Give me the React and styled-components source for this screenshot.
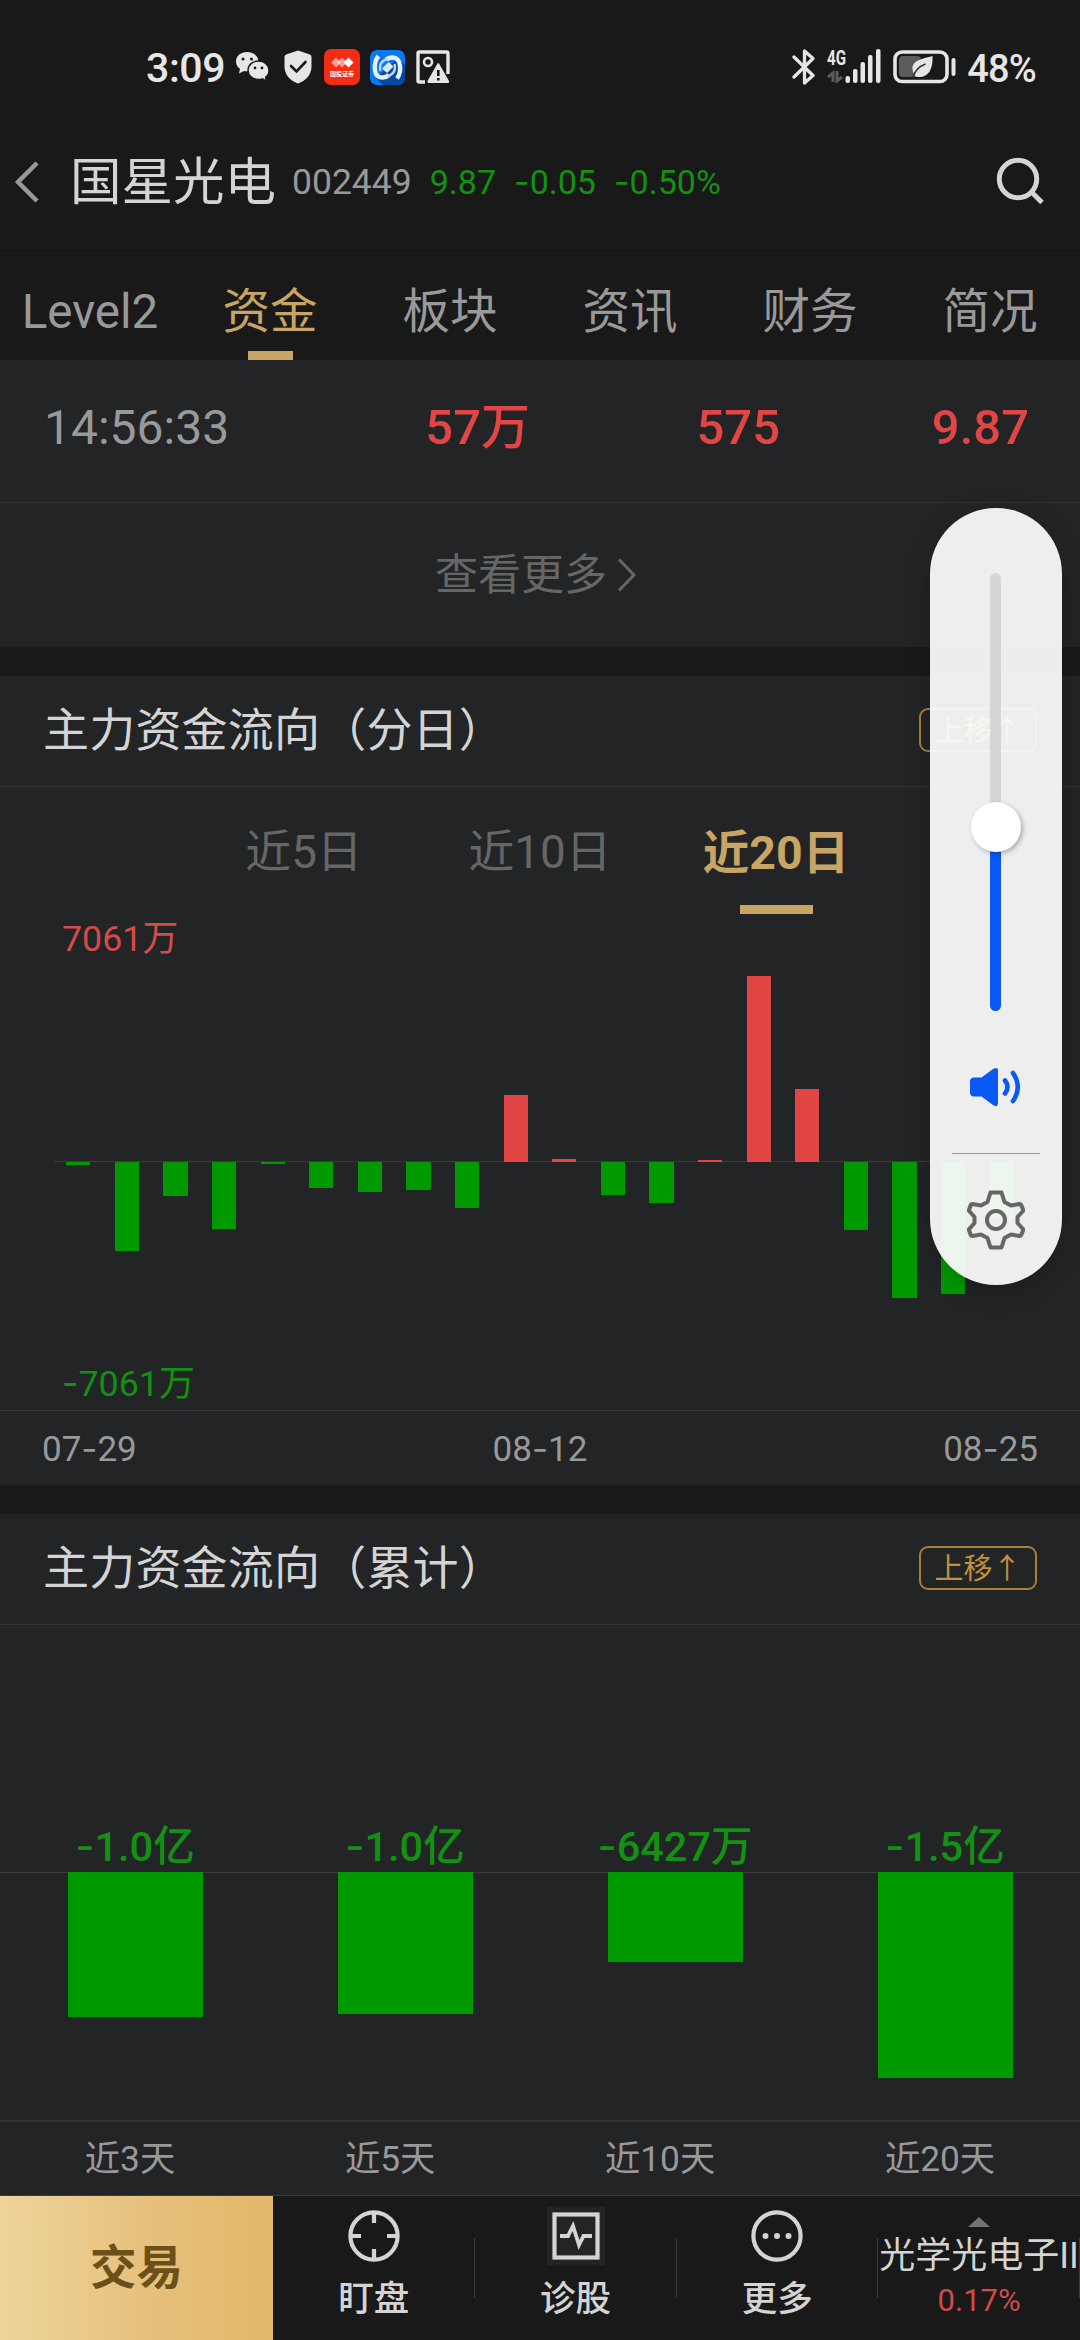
import React from 'react';
import styled, { createGlobalStyle } from 'styled-components';

const RED = '#e14645';
const GREEN = '#009900';
const GOLD = '#c8a564';

const GlobalStyle = createGlobalStyle`
  * { box-sizing: border-box; }

  body {
    margin     : 0;
    background : #19191a;
    font-family: Roboto, "Noto Sans CJK SC", sans-serif;
  }
`;

const Page = styled.div`
  position: relative;
  width   : 1080px;
  height  : 2340px;
  overflow: hidden;
  color   : #d4d4d4;
`;

/* ---------- status bar ---------- */

const StatusBar = styled.div`
  display        : flex;
  align-items    : center;
  justify-content: space-between;
  height         : 116px;
  padding        : 18px 44px 0 146px;
  color          : #e6e6e6;
`;

const StatusGroup = styled.div`
  display    : flex;
  align-items: center;
`;

const StatusIcon = styled.svg`
  flex       : none;
  display    : block;
  margin-left: ${(props) => props.$gap || 0}px;
`;

const Clock = styled.span`
  width      : 77px;
  padding-top: 2px;
  font-size  : 41px;
  font-weight: 500;
  line-height: 48px;
  white-space: nowrap;

  letter-spacing: -0.4px;
`;

const Percent = styled.span`
  margin-left   : 10px;
  padding-top   : 3px;
  font-size     : 38px;
  font-weight   : 500;
  line-height   : 48px;
  letter-spacing: -0.8px;
`;

/* ---------- header ---------- */

const Header = styled.header`
  display      : flex;
  align-items  : center;
  height       : 135px;
  padding      : 0 34px 3px 14px;
  border-bottom: 1px solid #141415;
`;

const StockName = styled.h1`
  margin     : 0 0 0 29px;
  padding-top: 3px;
  font-size  : 51.5px;
  font-weight: 400;
  line-height: 60px;
`;

const StockCode = styled.span`
  margin-left: 16px;
  color      : #999;
  font-size  : 35.5px;
`;

const Quote = styled.span`
  margin-left: ${(props) => props.$gap}px;
  color      : #129112;
  font-size  : 34px;
  white-space: nowrap;
`;

const Dash = styled.span`
  font-family: Inter, sans-serif;
`;

const SearchIcon = styled.svg`
  margin-left: auto;
`;

const Tabs = styled.nav`
  display              : grid;
  grid-template-columns: repeat(6, 180px);
  height               : 109px;
`;

const Tab = styled.div`
  display        : flex;
  flex-direction : column;
  align-items    : center;
  justify-content: flex-end;
  color          : ${(props) => (props.$active ? GOLD : '#999')};
  font-size      : 47.5px;
  line-height    : 60px;

  &::after {
    content   : '';
    width     : 45px;
    height    : 9px;
    margin-top: 9px;
    background: ${(props) => (props.$active ? GOLD : 'transparent')};
  }
`;

/* ---------- panels ---------- */

const Panel = styled.section`
  margin-bottom: ${(props) => (props.$last ? 0 : 29)}px;
  background   : #222426;
`;

const DealRow = styled.div`
  display              : grid;
  grid-template-columns: 280px 206px 250px 249px;
  align-items          : center;
  height               : 143px;
  padding              : 0 44px 6px 44px;
  border-bottom        : 1px solid #303234;
  line-height          : 60px;
`;

const DealTime = styled.span`
  color    : #999;
  font-size: 48px;
`;

const DealValue = styled.span`
  color      : ${RED};
  font-size  : 49px;
  font-weight: 500;
  text-align : right;
`;

const SeeMore = styled.div`
  display        : flex;
  align-items    : center;
  justify-content: center;
  gap            : 10px;
  height         : 144px;
  padding-right  : 8px;
  color          : #666;
  font-size      : 43px;
  line-height    : 60px;
`;

const PanelHead = styled.div`
  display        : flex;
  align-items    : center;
  justify-content: space-between;
  height         : 111px;
  padding        : 0 43px 2px 43px;
  border-bottom  : 1px solid #303234;
`;

const PanelTitle = styled.h2`
  margin        : 0;
  font-size     : 46px;
  font-weight   : 400;
  line-height   : 60px;
  letter-spacing: 0.2px;
`;

const MoveUp = styled.button`
  width        : 118px;
  height       : 44px;
  padding      : 0;
  border       : 2px solid #a97f35;
  border-radius: 9px;
  background   : none;
  color        : #c0903c;
  font-family  : inherit;
  font-size    : 29px;
  line-height  : 43px;
`;

const Periods = styled.div`
  display              : grid;
  grid-template-columns: repeat(3, 236px);
  height               : 127px;
  padding-left         : 186px;
`;

const Period = styled.div`
  display        : flex;
  flex-direction : column;
  align-items    : center;
  justify-content: flex-end;
  color          : ${(props) => (props.$active ? GOLD : '#666')};
  font-size      : ${(props) => (props.$active ? 46.5 : 45.8)}px;
  font-weight    : ${(props) => (props.$active ? 700 : 400)};
  line-height    : 60px;

  &::after {
    content   : '';
    width     : 73px;
    height    : 9px;
    margin-top: 22px;
    background: ${(props) => (props.$active ? GOLD : 'transparent')};
  }
`;

const Limit = styled.div`
  height      : 48px;
  padding-left: 62px;
  color       : ${(props) => (props.$up ? '#d34c4a' : '#129112')};
  font-size   : 35.8px;
  line-height : ${(props) => (props.$up ? 50 : 43)}px;
`;

const DailyPlot = styled.div`
  display              : grid;
  grid-template-columns: repeat(20, 1fr);
  height               : 400px;
  margin               : 0 54px;
  background           : linear-gradient(#3b3b3d, #3b3b3d) 0 199px / 100% 1px no-repeat;
`;

const DailyColumn = styled.div`
  display           : grid;
  grid-template-rows: 200px 200px;
  justify-items     : center;
`;

const Bar = styled.div`
  width     : 50%;
  background: ${(props) => (props.$up ? RED : GREEN)};
  align-self: ${(props) => (props.$up ? 'end' : 'start')};
  grid-row  : ${(props) => (props.$up ? 1 : 2)};
`;

const Dates = styled.div`
  display        : flex;
  align-items    : center;
  justify-content: space-between;
  height         : 75px;
  padding        : 0 42px;
  border-top     : 1px solid #38393b;
  color          : #999;
  font-size      : 35px;
`;

const TotalPlot = styled.div`
  display              : grid;
  grid-template-columns: repeat(4, 270px);
  height               : 495px;
  background           : linear-gradient(#3b3b3d, #3b3b3d) 0 247px / 100% 1px no-repeat;
`;

const TotalColumn = styled.div`
  display           : grid;
  grid-template-rows: 247px 248px;
  justify-items     : center;
`;

const TotalValue = styled.span`
  align-self : end;
  color      : #129112;
  font-size  : 41.5px;
  font-weight: 500;
  line-height: 51px;
`;

const TotalLabels = styled.div`
  display        : flex;
  align-items    : center;
  justify-content: space-around;
  height         : 75px;
  border-top     : 2px solid #303234;
  color          : #999;
  font-size      : 35.3px;
  line-height    : 44px;
`;

/* ---------- bottom bar ---------- */

const BottomBar = styled.footer`
  display              : grid;
  grid-template-columns: 273px repeat(4, 1fr);
  height               : 145px;
  border-top           : 1px solid #3b3b3d;
`;

const Trade = styled.div`
  display        : flex;
  align-items    : center;
  justify-content: center;
  background     : linear-gradient(90deg, #eed49b, #e6c07c 55%, #e1b769);
  color          : #6b5019;
  font-size      : 46.5px;
  font-weight    : 700;
  line-height    : 60px;
`;

const BottomItem = styled.div`
  display       : flex;
  flex-direction: column;
  align-items   : center;
  padding-top   : 11px;
  background    : linear-gradient(#3b3b3d, #3b3b3d) 100% 42px / 1px 60px no-repeat;
  font-size     : 35.5px;
  font-weight   : 500;
  line-height   : 44px;

  svg { margin-bottom: 12px; }
`;

const BottomIndex = styled(BottomItem)`
  padding-top: 21px;
  font-weight: 400;
  font-size  : 36px;
  white-space: nowrap;

  svg { margin-bottom: 7px; }
`;

const IndexChange = styled.span`
  margin-top : 3px;
  color      : #cf4b48;
  font-size  : 31px;
  line-height: 40px;
`;

/* ---------- volume overlay ---------- */

const VolumePanel = styled.aside`
  position      : absolute;
  top           : 508px;
  left          : 930px;
  display       : flex;
  flex-direction: column;
  align-items   : center;
  width         : 132px;
  height        : 777px;
  padding-top   : 65px;
  border-radius : 66px;
  background    : rgba(253, 253, 253, 0.932);
  box-shadow    : 0 6px 24px rgba(0, 0, 0, 0.22);
`;

const VolumeTrack = styled.div`
  display        : flex;
  flex-direction : column;
  justify-content: flex-end;
  align-items    : center;
  width          : 11px;
  height         : 438px;
  border-radius  : 6px;
  background     : #d6d6d6;
  margin-right   : 1px;
`;

const VolumeThumb = styled.div`
  flex         : none;
  width        : 50px;
  height       : 50px;
  margin-bottom: -4px;
  border-radius: 50%;
  background   : #fff;
  box-shadow   : 2px 2px 5px rgba(0, 0, 0, 0.28);
  z-index      : 1;
`;

const VolumeLevel = styled.div`
  width        : 11px;
  border-radius: 0 0 6px 6px;
  background   : #0a59f7;
`;

const VolumeDivider = styled.div`
  width     : 88px;
  height    : 1px;
  margin    : 45px 0 35px;
  background: #9a9a9a;
`;

const VolumeIcon = styled.svg`
  margin-top: 55px;
`;

const TABS = ['Level2', '资金', '板块', '资讯', '财务', '简况'];

// bar lengths in px, positive is inflow
const DAILY = [-3, -89, -34, -67, -2, -26, -30, -28, -46, 67, 3, -33, -41, 2, 186, 73, -68, -136, -132, -56];

const TOTALS = [
  { label: '近3天', value: '-1.0亿', size: 145 },
  { label: '近5天', value: '-1.0亿', size: 142 },
  { label: '近10天', value: '-6427万', size: 90 },
  { label: '近20天', value: '-1.5亿', size: 206 },
];

const Num = ({ children }) => children.split('-').map((part, i) => (
  <React.Fragment key={i}>{i > 0 && <Dash>-</Dash>}{part}</React.Fragment>
));

const Status = () => (
  <StatusBar>
    <StatusGroup>
      <Clock>3:09</Clock>
      <StatusIcon $gap={12} width="35" height="30" viewBox="0 0 35 30" fill="#e6e6e6">
        <path d="M12 0C5.4 0 1 4.400 1 9.500c0 3.100 1.600 5.600 4 7.300L4 21.500l5-2.600c1 .3 2 .4 3 .4C18.500 19.300 23.500 15 23.500 9.700 23.500 4.300 18.500 0 12 0z" />
        <path d="M23.500 9C17.700 9 13 13 13 18.200s4.700 9.200 10.500 9.200c1.400 0 2.700-.2 3.900-.6l4.300 2.400-1.100-4C32.800 23.500 34 21 34 18.200 34 13 29.300 9 23.500 9z" stroke="#19191a" strokeWidth="1.400" />
        <g fill="#19191a">
          <circle cx="8" cy="7" r="1.500" /><circle cx="16.500" cy="7" r="1.500" />
          <circle cx="20" cy="16" r="1.400" /><circle cx="27" cy="16" r="1.400" />
        </g>
      </StatusIcon>
      <StatusIcon $gap={14} width="28" height="34" viewBox="0 0 28 34">
        <path d="M14 .5 25.800 4.600Q27.500 5.200 27.500 7v9.500C27.500 25 21.500 30.800 14 33.500 6.500 30.800.5 25 .5 16.500V7Q.5 5.200 2.200 4.600z" fill="#e6e6e6" />
        <path d="m7 16 5.500 5.500L21.500 12" fill="none" stroke="#19191a" strokeWidth="2.600" strokeLinecap="round" />
      </StatusIcon>
      <StatusIcon $gap={12} width="36" height="36" viewBox="0 0 36 36">
        <rect width="36" height="36" rx="7" fill="#f42c13" />
        <path d="m12 8.500 5 5-5 5-5-5z" fill="#fff" opacity=".55" />
        <path d="m18 8.500 5 5-5 5-5-5z" fill="#fff" opacity=".55" />
        <path d="m24.500 8.500 5 5-5 5-5-5z" fill="#fff" />
        <text x="18" y="27.300" textAnchor="middle" fontSize="6" fontWeight="700" fill="#fff">国投证券</text>
      </StatusIcon>
      <StatusIcon $gap={10} width="35" height="35" viewBox="0 0 35 35">
        <rect width="35" height="35" rx="7" fill="#0a78f0" />
        <path d="M28 8 35 15v13a7 7 0 0 1-7 7H13L6 28z" fill="#064a9e" />
        <path d="M8.500 6C3.500 12 2.500 27 12 27.500q4 .2 7-2.500" fill="none" stroke="#e4f0fd" strokeWidth="4.400" />
        <path d="M27 28.500C31.500 22 32 8.500 23 7.500q-4-.2-7 2" fill="none" stroke="#e4f0fd" strokeWidth="4.400" />
        <path d="M10.500 21C8.500 14 13 9.500 18 9M24.500 14c2 7-2.500 11.500-7.500 12" fill="none" stroke="#bcd9f8" strokeWidth="2.400" />
        <path d="m18.500 12 5 4.500-6.500 6.500-5-4.500z" fill="#d7e8fb" />
      </StatusIcon>
      <StatusIcon $gap={11} width="34" height="34" viewBox="0 0 34 34">
        <path d="M9 32H3.500Q2 32 2 30.500v-27Q2 2 3.500 2h27Q32 2 32 3.500V24" fill="none" stroke="#e6e6e6" strokeWidth="3.400" />
        <circle cx="12" cy="12" r="4" fill="none" stroke="#e6e6e6" strokeWidth="2.600" />
        <path d="M21.500 13.500Q22.300 12.500 23 13.500L33 31q.7 2-1 2H12.500q-1.700 0-1-2z" fill="#e6e6e6" />
        <path d="M22.300 20v6M22.300 28v2.400" stroke="#19191a" strokeWidth="2.600" />
      </StatusIcon>
    </StatusGroup>
    <StatusGroup>
      <StatusIcon width="24" height="36" viewBox="0 0 24 36" fill="none" stroke="#e6e6e6" strokeWidth="3.300" strokeLinejoin="round" strokeLinecap="round">
        <path d="M2 8 21 26.500 12.500 34V2L21 9.500 2 28" />
      </StatusIcon>
      <StatusIcon $gap={11} width="56" height="60" viewBox="0 -12 56 60">
        <text x="0" y="15.500" fontSize="20" fontWeight="700" fill="#e6e6e6" textLength="19" lengthAdjust="spacingAndGlyphs">4G</text>
        <path d="M6 33V24L1 28M10 22v10l5-4" fill="none" stroke="#5c5c5d" strokeWidth="3" />
        <g fill="#e6e6e6">
          <rect x="18.500" y="27" width="4.500" height="7" rx="2" />
          <rect x="26" y="20" width="4.500" height="14" rx="2" />
          <rect x="33.500" y="13" width="4.500" height="21" rx="2" />
          <rect x="41" y="6" width="4.500" height="28" rx="2" />
          <rect x="49" y="0" width="4.500" height="34" rx="2" />
        </g>
      </StatusIcon>
      <StatusIcon $gap={10} width="64" height="34" viewBox="0 0 64 34">
        <rect x="2" y="2" width="52" height="29.500" rx="7" fill="none" stroke="#e6e6e6" strokeWidth="3.600" />
        <rect x="6" y="6" width="22" height="21" rx="4" fill="#5c5c5d" />
        <path d="M39.500 6c.7 13-4 21-13 21-2 0-3-.3-4.500-1C14 11 27 9.500 39.500 6z" fill="#e6e6e6" />
        <path d="M20 27.500C22 20 27 16 32.500 14" fill="none" stroke="#333" strokeWidth="1.600" />
        <rect x="58.500" y="8" width="4" height="18" rx="2" fill="#e6e6e6" />
      </StatusIcon>
      <Percent>48%</Percent>
    </StatusGroup>
  </StatusBar>
);

const DailyPanel = () => (
  <Panel>
    <PanelHead>
      <PanelTitle>主力资金流向（分日）</PanelTitle>
      <MoveUp>上移↑</MoveUp>
    </PanelHead>
    <Periods>
      <Period>近5日</Period>
      <Period>近10日</Period>
      <Period $active>近20日</Period>
    </Periods>
    <Limit $up>7061万</Limit>
    <DailyPlot>
      {DAILY.map((size, i) => (
        <DailyColumn key={i}>
          <Bar $up={size > 0} style={{ height: Math.abs(size) }} />
        </DailyColumn>
      ))}
    </DailyPlot>
    <Limit><Num>-7061万</Num></Limit>
    <Dates>
      <span><Num>07-29</Num></span>
      <span><Num>08-12</Num></span>
      <span><Num>08-25</Num></span>
    </Dates>
  </Panel>
);

const TotalPanel = () => (
  <Panel $last>
    <PanelHead>
      <PanelTitle>主力资金流向（累计）</PanelTitle>
      <MoveUp>上移↑</MoveUp>
    </PanelHead>
    <TotalPlot>
      {TOTALS.map(({ label, value, size }) => (
        <TotalColumn key={label}>
          <TotalValue><Num>{value}</Num></TotalValue>
          <Bar style={{ height: size }} />
        </TotalColumn>
      ))}
    </TotalPlot>
    <TotalLabels>
      {TOTALS.map(({ label }) => <span key={label}>{label}</span>)}
    </TotalLabels>
  </Panel>
);

const Volume = () => (
  <VolumePanel>
    <VolumeTrack>
      <VolumeThumb />
      <VolumeLevel style={{ height: 163 }} />
    </VolumeTrack>
    <VolumeIcon width="54" height="42" viewBox="0 0 54 42">
      <path d="M5 11.500h7.500L24 3Q29 0 29 5v32q0 5-5 2L12.500 30.500H5q-4 0-4-4v-11q0-4 4-4z" fill="#0a59f7" />
      <path d="M36 14.500q5 6.500 0 13M44 7q9.500 14 0 28" fill="none" stroke="#0a59f7" strokeWidth="4.600" strokeLinecap="round" />
    </VolumeIcon>
    <VolumeDivider />
    <svg width="58" height="62" viewBox="0 0 58 62" fill="none" stroke="#666" strokeWidth="4" strokeLinejoin="round">
      <path d="M23.500 3.500h11l3 9.500 6.500 3.500 8.500-1.500q1.200 0 1.700 1l2.300 5.500-6 6.500v6l6 6.500-2.300 5.500q-.5 1-1.700 1L44 45.500 37.500 49l-3 9.500h-11l-3-9.500-6.500-3.500L5.500 47q-1.200 0-1.700-1l-2-5.500 5.700-6.500v-6l-5.700-6.500 2-5.500q.5-1 1.700-1l8.500 1.500L20.500 13z" />
      <circle cx="29" cy="31" r="9" />
    </svg>
  </VolumePanel>
);

const Bottom = () => (
  <BottomBar>
    <Trade>交易</Trade>
    <BottomItem>
      <svg width="58" height="58" viewBox="0 0 58 58" fill="none" stroke="#d4d4d4" strokeWidth="4.200">
        <circle cx="29" cy="29" r="23.600" />
        <path d="M29 5v11M29 42v11M5 29h11M42 29h11" />
      </svg>
      盯盘
    </BottomItem>
    <BottomItem>
      <svg width="58" height="58" viewBox="0 0 58 58" fill="none" stroke="#d4d4d4" strokeWidth="4.200">
        <rect width="58" height="58" fill="#222426" stroke="none" />
        <rect x="7.500" y="7.500" width="43" height="43" />
        <path d="M13 29h8l5-10 6 19 4.500-9H45" strokeWidth="3.800" />
      </svg>
      诊股
    </BottomItem>
    <BottomItem>
      <svg width="58" height="58" viewBox="0 0 58 58" fill="none" stroke="#d4d4d4" strokeWidth="4.200">
        <circle cx="29" cy="29" r="23.600" />
        <g fill="#d4d4d4" stroke="none">
          <circle cx="17.500" cy="29" r="3" /><circle cx="29" cy="29" r="3" /><circle cx="40.500" cy="29" r="3" />
        </g>
      </svg>
      更多
    </BottomItem>
    <BottomIndex>
      <svg width="22" height="10" viewBox="0 0 22 10"><path d="M11 0 22 10H0z" fill="#737374" /></svg>
      光学光电子II
      <IndexChange>0.17%</IndexChange>
    </BottomIndex>
  </BottomBar>
);

const App = () => (
  <Page>
    <GlobalStyle />
    <Status />
    <Header>
      <svg width="27" height="42" viewBox="0 0 27 42" fill="none" stroke="#999" strokeWidth="4.500">
        <path d="M23 2 4 21 23 40" />
      </svg>
      <StockName>国星光电</StockName>
      <StockCode>002449</StockCode>
      <Quote $gap={18}>9.87</Quote>
      <Quote $gap={18}><Num>-0.05</Num></Quote>
      <Quote $gap={18}><Num>-0.50%</Num></Quote>
      <SearchIcon width="50" height="50" viewBox="0 0 50 50" fill="none" stroke="#d4d4d4" strokeWidth="5">
        <circle cx="22" cy="22" r="18.700" />
        <path d="M35.500 35 46 45.500" />
      </SearchIcon>
    </Header>
    <Tabs>
      {TABS.map((name) => <Tab key={name} $active={name === '资金'}>{name}</Tab>)}
    </Tabs>
    <Panel>
      <DealRow>
        <DealTime>14:56:33</DealTime>
        <DealValue>57万</DealValue>
        <DealValue>575</DealValue>
        <DealValue>9.87</DealValue>
      </DealRow>
      <SeeMore>
        查看更多
        <svg width="20" height="34" viewBox="0 0 20 34" fill="none" stroke="#666" strokeWidth="3">
          <path d="M2 1.500 17 17 2 32.500" />
        </svg>
      </SeeMore>
    </Panel>
    <DailyPanel />
    <TotalPanel />
    <Bottom />
    <Volume />
  </Page>
);

export default App;
